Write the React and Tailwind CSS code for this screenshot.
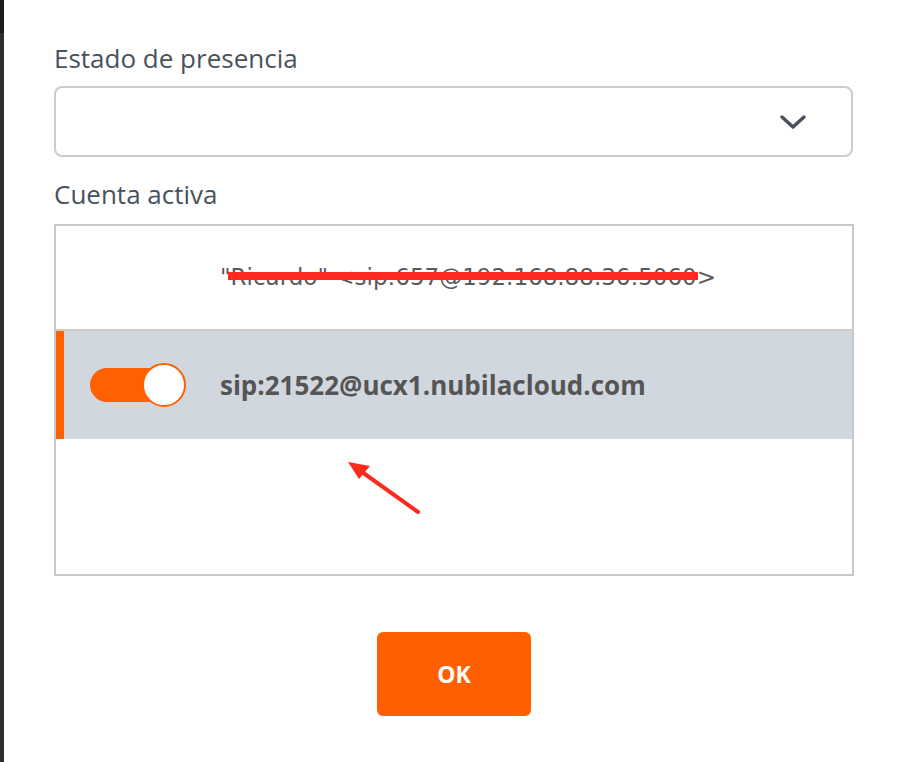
export default function App() {
  return (
    <div className="flex min-h-[762px] bg-white" style={{ fontFamily: '"Open Sans", "Noto Sans", sans-serif' }}>
      <div className="flex w-[4px] flex-col">
        <div className="h-[33px] bg-[#1c1c1c]" />
        <div className="flex-1 bg-[#2e2e2e]" />
      </div>

      <div className="relative flex w-[850px] flex-col pl-[50px] pt-[41px]">
        <label className="text-[26px] leading-[34px] text-[#47525c]">Estado de presencia</label>
        <div className="mt-[11px] flex h-[71px] w-[799px] items-center justify-end rounded-[8px] border-2 border-[#cccccc] pr-[44px]">
          <svg width="28" height="18" viewBox="0 0 28 18" fill="none">
            <path d="M3 4l11 10L25 4" stroke="#47525c" strokeWidth="3.5" strokeLinecap="round" strokeLinejoin="round" />
          </svg>
        </div>

        <label className="mt-[20px] text-[26px] leading-[34px] text-[#47525c]">Cuenta activa</label>
        <div className="mt-[13px] flex h-[352px] w-[800px] flex-col border-2 border-[#c8c8c8]">
          <div className="relative flex h-[105px] items-center border-b-2 border-[#cccccc] pl-[164px]">
            <span className="text-[23px] text-[#5a5a5a]" style={{ fontFamily: '"DejaVu Sans", sans-serif' }}>
              "Ricardo" &lt;sip:657@192.168.88.36:5060&gt;
            </span>
            <div className="absolute left-[172px] top-[46px] h-[8px] w-[470px] bg-[#ff2a1f]" />
          </div>
          <div className="flex h-[108px] items-center border-l-[8px] border-[#ff6000] bg-[#d0d7de] pl-[26px]">
            <div className="relative h-[44px] w-[96px]">
              <div className="absolute left-0 top-[5px] h-[34px] w-[80px] rounded-full bg-[#ff6000]" />
              <div className="absolute right-0 top-0 h-[44px] w-[44px] rounded-full border-2 border-[#ff6000] bg-white" />
            </div>
            <span className="ml-[34px] text-[26px] font-bold text-[#555555]">sip:21522@ucx1.nubilacloud.com</span>
          </div>
          <div className="flex-1" />
        </div>

        <div className="mt-[56px] flex w-[800px] justify-center">
          <button className="h-[84px] w-[154px] rounded-[6px] bg-[#ff5f00] text-[23px] font-bold text-white">OK</button>
        </div>

        <svg className="absolute left-[339px] top-[455px]" width="84" height="64" viewBox="0 0 84 64">
          <path d="M75 57L19 17" stroke="#ff2a1f" strokeWidth="4" strokeLinecap="round" />
          <path d="M5 7l22 4-11 13z" fill="#ff2a1f" />
        </svg>
      </div>
    </div>
  );
}
